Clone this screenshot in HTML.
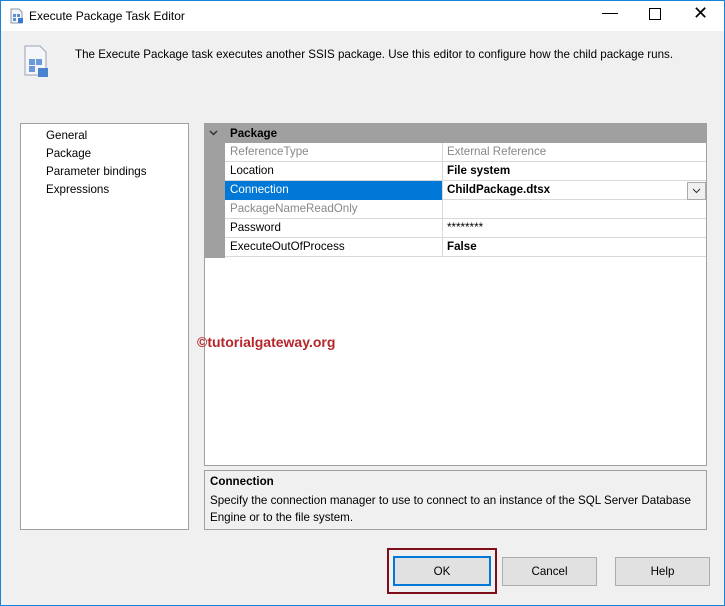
<!DOCTYPE html><html><head><style>
body{margin:0;width:725px;height:606px;overflow:hidden;font-family:"Liberation Sans",sans-serif;font-size:11.6px;color:#000}
.win{position:absolute;left:0;top:0;width:725px;height:606px;background:#f0f0f0}
.frame{position:absolute;left:0;top:0;width:723px;height:604px;border:1px solid #1883d7;z-index:5}
.title{position:absolute;left:0;top:0;width:725px;height:31px;background:#fff}
.a{position:absolute}
.row{position:absolute;left:225px;width:481px;height:18px;border-bottom:1px solid #d8d8d8;background:#fff}
.row span{position:absolute;top:2px}
.n{left:5px}.v{left:222px}
.sep{position:absolute;left:217px;top:0;width:1px;height:19px;background:#d8d8d8}
.btn{position:absolute;top:557px;height:27px;background:#e1e1e1;border:1px solid #adadad;text-align:center;line-height:27px}
</style></head><body><div class="win">
<div class="frame"></div>
<div class="title">
<svg class="a" style="left:9px;top:8px" width="16" height="16"><path d="M2 1h8l3 3v11H2z" fill="#f4f6f9" stroke="#8a97a8"/><rect x="4" y="6" width="3" height="3" fill="#5b8fd6"/><rect x="8" y="6" width="3" height="3" fill="#5b8fd6"/><rect x="4" y="10" width="3" height="3" fill="#5b8fd6"/><rect x="9" y="10" width="5" height="5" fill="#3a78d0"/></svg>
<div class="a" style="left:29px;top:9px;font-size:12px">Execute Package Task Editor</div>
<div class="a" style="left:602px;top:13px;width:16px;height:1px;background:#000"></div>
<div class="a" style="left:649px;top:8px;width:10px;height:10px;border:1px solid #000"></div>
<div class="a" style="left:693px;top:3px;font-size:18px">&#10005;</div>
</div>
<svg class="a" style="left:23px;top:45px" width="26" height="32"><path d="M2 1h15l6 6v23H2z" fill="#f4f6f9" stroke="#9aa4b2"/><rect x="6" y="14" width="6" height="6" fill="#6a9ad8"/><rect x="13" y="14" width="6" height="6" fill="#6a9ad8"/><rect x="6" y="21" width="6" height="6" fill="#6a9ad8"/><rect x="15" y="23" width="10" height="9" fill="#4a82d0"/></svg>
<div class="a" style="left:75px;top:48px">The Execute Package task executes another SSIS package. Use this editor to configure how the child package runs.</div>
<div class="a" style="left:20px;top:123px;width:167px;height:405px;background:#fff;border:1px solid #a0a0a0"></div>
<div class="a" style="left:46px;top:127px;line-height:18px">General<br>Package<br>Parameter bindings<br>Expressions</div>
<div class="a" style="left:204px;top:123px;width:501px;height:341px;background:#fff;border:1px solid #a0a0a0"></div>
<div class="a" style="left:205px;top:124px;width:501px;height:19px;background:#a0a0a0"></div>
<div class="a" style="left:205px;top:124px;width:20px;height:134px;background:#a0a0a0"></div>
<svg class="a" style="left:209px;top:130px" width="9" height="6"><path d="M1 1l3.5 3.5L8 1" fill="none" stroke="#333" stroke-width="1.5"/></svg>
<div class="a" style="left:230px;top:127px;font-weight:bold">Package</div>
<div class="row" style="top:143px;color:#888"><span class="n">ReferenceType</span><div class="sep"></div><span class="v">External Reference</span></div>
<div class="row" style="top:162px"><span class="n">Location</span><div class="sep"></div><span class="v" style="font-weight:bold">File system</span></div>
<div class="row" style="top:181px"><div class="a" style="left:0;top:0;width:217px;height:19px;background:#0078d7"></div><span class="n" style="color:#fff">Connection</span><div class="sep"></div><span class="v" style="font-weight:bold">ChildPackage.dtsx</span><div class="a" style="left:462px;top:1px;width:17px;height:16px;border:1px solid #aaa;background:#f0f0f0"><svg style="position:absolute;left:4px;top:5px" width="9" height="6"><path d="M1 1l3.5 3.5L8 1" fill="none" stroke="#333"/></svg></div></div>
<div class="row" style="top:200px;color:#888"><span class="n">PackageNameReadOnly</span><div class="sep"></div></div>
<div class="row" style="top:219px"><span class="n">Password</span><div class="sep"></div><span class="v">********</span></div>
<div class="row" style="top:238px"><span class="n">ExecuteOutOfProcess</span><div class="sep"></div><span class="v" style="font-weight:bold">False</span></div>
<div class="a" style="left:197px;top:334px;font-size:14px;font-weight:bold;color:#b5262b">©tutorialgateway.org</div>
<div class="a" style="left:204px;top:470px;width:501px;height:58px;border:1px solid #a0a0a0;background:#f0f0f0"></div>
<div class="a" style="left:210px;top:475px;font-weight:bold">Connection</div>
<div class="a" style="left:210px;top:492px;line-height:17px">Specify the connection manager to use to connect to an instance of the SQL Server Database<br>Engine or to the file system.</div>
<div class="a" style="left:387px;top:548px;width:106px;height:42px;border:2px solid #7e0d1a"></div>
<div class="btn" style="left:393px;width:94px;border:2px solid #0078d7;top:556px;height:26px">OK</div>
<div class="btn" style="left:502px;width:93px">Cancel</div>
<div class="btn" style="left:615px;width:93px">Help</div>
</div></body></html>
